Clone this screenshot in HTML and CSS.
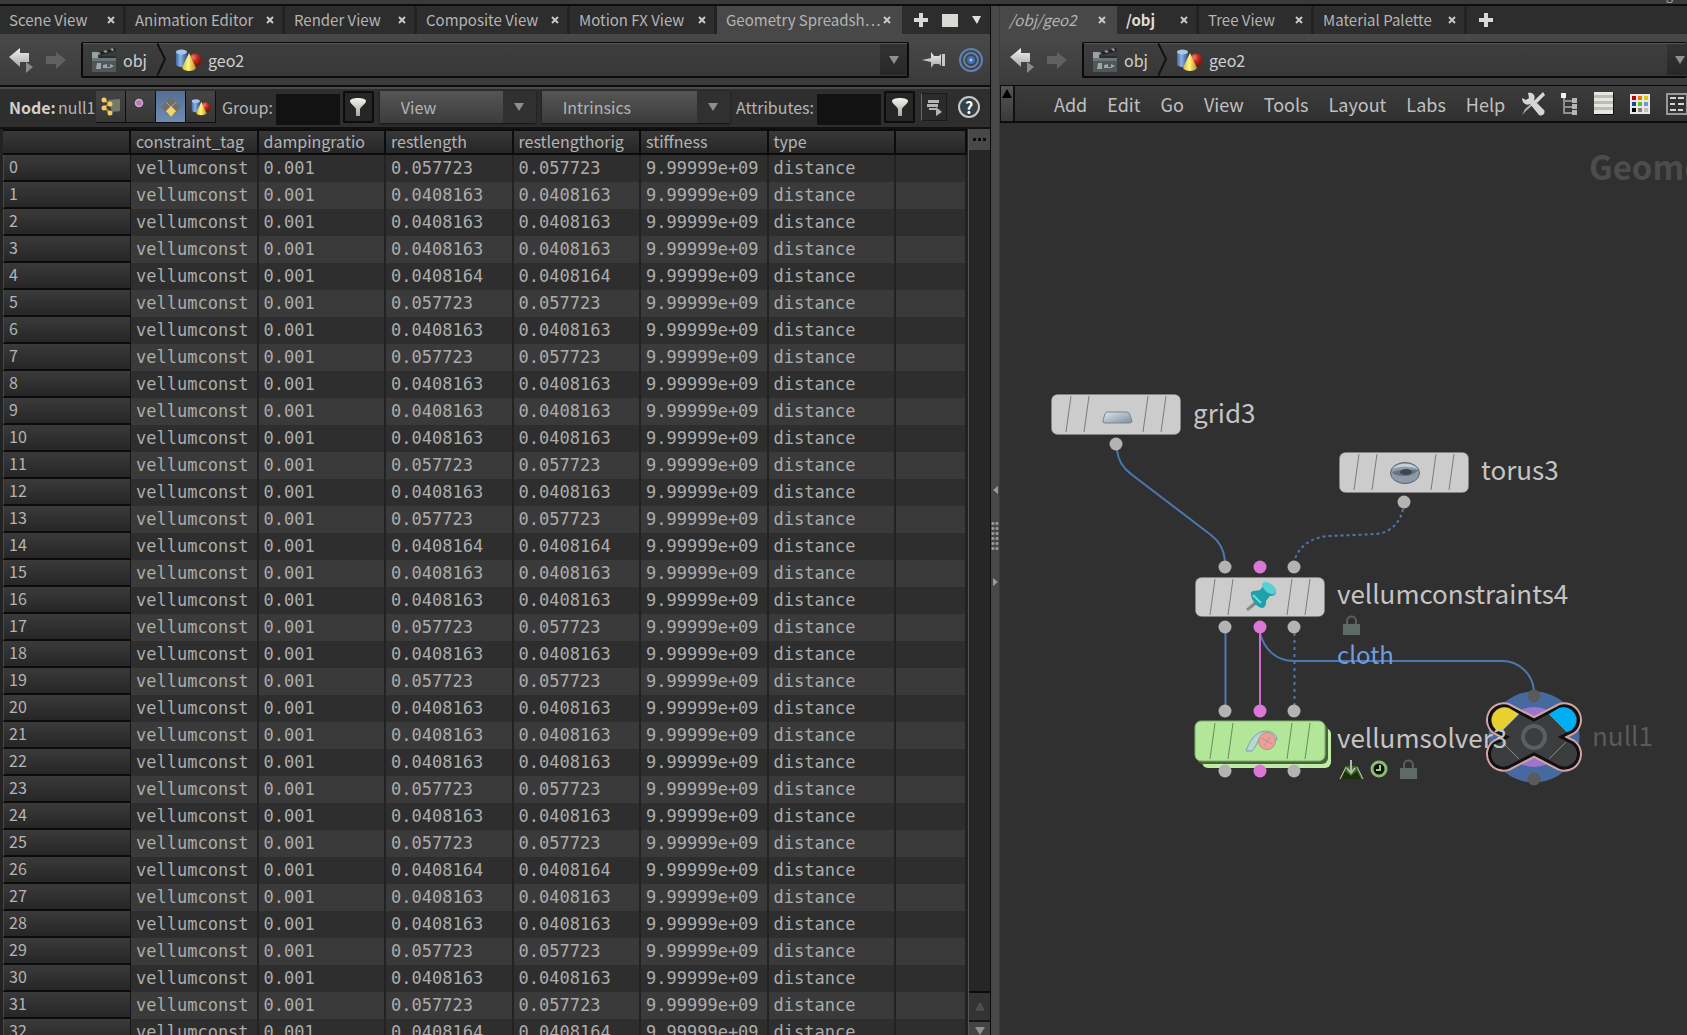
FILE: index.html
```html
<!DOCTYPE html>
<html lang="en">
<head>
<meta charset="utf-8">
<title>Geometry Spreadsheet</title>
<link rel="stylesheet" href="styles.css">
</head>
<body>
<svg class="defs" width="0" height="0" aria-hidden="true">
  <defs>
    <linearGradient id="gBlue" x1="0" x2="1"><stop offset="0" stop-color="#3f6aa3"/><stop offset=".4" stop-color="#8db3e0"/><stop offset="1" stop-color="#2d5388"/></linearGradient>
    <radialGradient id="gRed" cx=".35" cy=".3" r=".7"><stop offset="0" stop-color="#f08070"/><stop offset=".5" stop-color="#c0281c"/><stop offset="1" stop-color="#7d120c"/></radialGradient>
    <linearGradient id="gYellow" x1="0" x2="1"><stop offset="0" stop-color="#d8b820"/><stop offset=".45" stop-color="#fff48a"/><stop offset="1" stop-color="#b8900c"/></linearGradient>
    <linearGradient id="gSilver" x1="0" y1="0" x2="0" y2="1"><stop offset="0" stop-color="#f4f4f0"/><stop offset="1" stop-color="#a4a8a4"/></linearGradient>
    <linearGradient id="gSteel" x1="0" y1="0" x2="1" y2="1"><stop offset="0" stop-color="#dfe6ec"/><stop offset="1" stop-color="#7d8d9c"/></linearGradient>
    <symbol id="geo" viewBox="0 0 27 24">
      <path d="M1 4v12c0 4 11 4 11 0V4z" fill="url(#gBlue)"/><ellipse cx="6.500" cy="4" rx="5.500" ry="2.500" fill="#a9c6e8"/>
      <circle cx="20" cy="12" r="6.500" fill="url(#gRed)"/>
      <path d="M14 5l7 15c-2 4-12 4-14 0z" fill="url(#gYellow)"/>
    </symbol>
    <symbol id="clapper" viewBox="0 0 26 26">
      <rect x="1" y="11" width="24" height="14" fill="#4f5759"/><rect x="1" y="11" width="24" height="3" fill="#6b7476"/>
      <path d="M1 7l23-6 1 3L2 10z" fill="#1d1f20"/><path d="M5 6l3-1 2 2-3 1zM12 4l3-1 2 2-3 1zM19 2l3-1 1 3-2 0z" fill="#8b9496"/>
      <rect x="1" y="5" width="6" height="6" fill="#9aa3a4"/><path d="M8 9h17v2H8z" fill="#2a2d2e"/>
      <path d="M6 16h4v6H5zM12 18l4-1v3h3v-3l4 2-4 2h-7z" fill="#9fa8a9"/>
    </symbol>
    <symbol id="back" viewBox="0 0 25 26">
      <path d="M0 10L11 1v5h9v9h-9v5z" fill="url(#gSilver)"/><path d="M17 15l7 5-7 6z" fill="#8a8a8a"/>
    </symbol>
    <symbol id="fwd" viewBox="0 0 20 20"><path d="M20 10L10 2v4H0v8h10v5z" fill="#606060"/></symbol>
    <symbol id="down" viewBox="0 0 10 8"><path d="M0 0h10L5 8z" fill="#8f8f8f"/></symbol>
    <symbol id="plus" viewBox="0 0 14 14"><path d="M5 0h4v5h5v4H9v5H5V9H0V5h5z" fill="#d8d8d4"/></symbol>
    <symbol id="close" viewBox="0 0 8 8"><path d="M1 1l6 6M7 1L1 7" stroke="#c8c8c8" stroke-width="2"/></symbol>
    <symbol id="funnel" viewBox="0 0 18 20"><path d="M1 4c0-4 16-4 16 0 0 3-5 5-6 8v7H7v-7C6 9 1 7 1 4z" fill="url(#gSilver)"/></symbol>
  </defs>
</svg>

<div class="shelf"><span class="shelf-text shelf-solids">Solids</span><span class="shelf-text shelf-light">Light</span></div>

<main class="panes">
  <section class="pane">
    <nav class="tabs">
      <a class="tab t1" href="#">Scene View<svg class="x"><use href="#close"/></svg></a>
      <a class="tab t2" href="#">Animation Editor<svg class="x"><use href="#close"/></svg></a>
      <a class="tab t3" href="#">Render View<svg class="x"><use href="#close"/></svg></a>
      <a class="tab t4" href="#">Composite View<svg class="x"><use href="#close"/></svg></a>
      <a class="tab t5" href="#">Motion FX View<svg class="x"><use href="#close"/></svg></a>
      <a class="tab t6 active" href="#">Geometry Spreadsh…<svg class="x"><use href="#close"/></svg></a>
      <div class="tab-tools">
        <svg width="14" height="14"><use href="#plus"/></svg>
        <svg width="16" height="13"><rect width="16" height="13" fill="#d8d8d4"/></svg>
        <svg width="9" height="8"><path d="M0 0h9L5 8z" fill="#e0e0e0"/></svg>
      </div>
    </nav>
    <div class="path">
      <button class="ico back" aria-label="Back"><svg width="25" height="26"><use href="#back"/></svg></button>
      <button class="ico fwd" aria-label="Forward"><svg width="20" height="20"><use href="#fwd"/></svg></button>
      <div class="crumbs">
        <a class="crumb first" href="#"><svg width="26" height="26"><use href="#clapper"/></svg>obj</a>
        <svg class="chev" width="9" height="33"><path d="M0 0l8 16-8 17" fill="none" stroke="#111" stroke-width="2"/></svg>
        <a class="crumb" href="#"><svg width="27" height="24"><use href="#geo"/></svg>geo2</a>
        <button class="drop" aria-label="History"><svg width="10" height="8"><use href="#down"/></svg></button>
      </div>
      <button class="ico pin" aria-label="Pin"><svg width="25" height="20" viewBox="0 0 25 20"><path d="M0 10l9-2v4z" fill="#c8c8c8"/><path d="M9 2l3 4h5l2-2v12l-2-2h-5l-3 4z" fill="url(#gSilver)"/><path d="M20 4h3v12h-3z" fill="#c8c8c4"/></svg></button>
      <button class="ico" aria-label="Link"><svg width="24" height="24" viewBox="0 0 24 24"><g fill="none" stroke="#5f82b4" stroke-width="2"><circle cx="12" cy="12" r="11"/><circle cx="12" cy="12" r="7"/></g><circle cx="12" cy="12" r="4" fill="#3f70b8"/><circle cx="12" cy="12" r="1.500" fill="#a8c8f0"/></svg></button>
    </div>
    <form class="toolbar">
      <b class="node">Node:</b><span class="nodename">null1</span>
      <div class="modes">
        <button type="button" aria-label="Points"><svg width="20" height="20" viewBox="0 0 20 20"><path d="M7 3l12-1v12l-8 1z" fill="#77776a"/><path d="M3 3l6 4-6 3 6 6" fill="none" stroke="#a88a3c" stroke-width="2"/><g fill="#f0cc6c"><circle cx="3" cy="3" r="2.500"/><circle cx="9" cy="7" r="2.500"/><circle cx="3" cy="11" r="2.500"/><circle cx="9" cy="16" r="2.500"/></g></svg></button>
        <button type="button" aria-label="Vertices"><svg width="20" height="20" viewBox="0 0 20 20"><circle cx="8" cy="6" r="3.500" fill="#b07cb4" stroke="#d8a8dc" stroke-width="1.500"/></svg></button>
        <button type="button" class="on" aria-label="Primitives"><svg width="20" height="20" viewBox="0 0 20 20"><path d="M10 0l10 10-10 10L0 10z" fill="#716f68"/><path d="M5 5l10 10M15 5L5 15" stroke="#a8a698"/><path d="M10 9l5 5-5 6-5-6z" fill="#f4d468"/></svg></button>
        <button type="button" aria-label="Detail"><svg width="20" height="18"><use href="#geo"/></svg></button>
      </div>
      <label class="lbl" for="group">Group:</label><input id="group" type="text">
      <button type="button" class="filter" aria-label="Filter group"><svg width="18" height="20"><use href="#funnel"/></svg></button>
      <div class="sel view"><select aria-label="View"><option>View</option></select><svg width="10" height="8"><use href="#down"/></svg></div>
      <div class="sel intr"><select aria-label="Intrinsics"><option>Intrinsics</option></select><svg width="10" height="8"><use href="#down"/></svg></div>
      <label class="lbl" for="attrs">Attributes:</label><input id="attrs" type="text">
      <button type="button" class="filter" aria-label="Filter attributes"><svg width="18" height="20"><use href="#funnel"/></svg></button>
      <button type="button" class="opts" aria-label="Options"><svg width="16" height="18" viewBox="0 0 16 18"><path d="M2 2h11v3H2zM1 6h11v3H1zM3 10h8v2H3zM10 9l6 5-6 4z" fill="#b4b4b4"/></svg></button>
      <button type="button" class="help" aria-label="Help">?</button>
    </form>
    <div class="sheet">
      <table class="grid">
        <colgroup><col class="c-num"><col><col><col><col><col><col><col class="c-end"></colgroup>
        <thead><tr><th></th><th>constraint_tag</th><th>dampingratio</th><th>restlength</th><th>restlengthorig</th><th>stiffness</th><th>type</th><th></th></tr></thead>
        <tbody id="rows"></tbody>
      </table>
      <div class="scroll">
        <button class="dots" aria-label="Columns"><i></i><i></i><i></i></button>
        <div class="track"></div>
        <button class="up" aria-label="Scroll up"><svg width="9" height="9"><path d="M1 8l4-7 4 7z" fill="#4a4a4a" stroke="#585858"/></svg></button>
        <button class="dn" aria-label="Scroll down"><svg width="10" height="8"><use href="#down"/></svg></button>
      </div>
    </div>
  </section>

  <div class="splitter">
    <svg width="5" height="8"><path d="M5 0v8L0 4z" fill="#999"/></svg>
    <div class="grip"></div>
    <svg width="5" height="8"><path d="M0 0v8l5-4z" fill="#999"/></svg>
  </div>

  <section class="pane net">
    <nav class="tabs">
      <a class="tab r1 active" href="#"><em>/obj/geo2</em><svg class="x"><use href="#close"/></svg></a>
      <a class="tab r2" href="#"><b>/obj</b><svg class="x"><use href="#close"/></svg></a>
      <a class="tab r3" href="#">Tree View<svg class="x"><use href="#close"/></svg></a>
      <a class="tab r4" href="#">Material Palette<svg class="x"><use href="#close"/></svg></a>
      <div class="tab-tools"><svg width="14" height="14"><use href="#plus"/></svg></div>
    </nav>
    <div class="path">
      <button class="ico back" aria-label="Back"><svg width="25" height="26"><use href="#back"/></svg></button>
      <button class="ico fwd" aria-label="Forward"><svg width="20" height="20"><use href="#fwd"/></svg></button>
      <div class="crumbs">
        <a class="crumb first" href="#"><svg width="26" height="26"><use href="#clapper"/></svg>obj</a>
        <svg class="chev" width="9" height="33"><path d="M0 0l8 16-8 17" fill="none" stroke="#111" stroke-width="2"/></svg>
        <a class="crumb" href="#"><svg width="27" height="24"><use href="#geo"/></svg>geo2</a>
        <button class="drop" aria-label="History"><svg width="10" height="8"><use href="#down"/></svg></button>
      </div>
    </div>
    <div class="menubar">
      <button class="collapse" aria-label="Collapse"><svg width="10" height="9"><path d="M0 9l5-9 5 9z" fill="#000"/></svg></button>
      <nav class="menus">
        <a href="#">Add</a><a href="#">Edit</a><a href="#">Go</a><a href="#">View</a><a href="#">Tools</a><a href="#">Layout</a><a href="#">Labs</a><a href="#">Help</a>
      </nav>
      <div class="menu-icons">
        <svg width="24" height="24" viewBox="0 0 24 24"><path d="M22 1l1 2L5 19l-4 4 3-6z" fill="#a8acac"/><path d="M22 0l2 3-8 8-3-2z" fill="#d8dad8"/><path d="M1 6l4 2 3-2-1-5c5-1 8 3 6 7l10 10c2 3-2 7-5 5L9 12c-4 2-8-1-8-6z" fill="#d4d6d2"/></svg>
        <svg width="17" height="24" viewBox="0 0 17 24"><path d="M3 3v18h9M3 9h9M3 15h9" fill="none" stroke="#8c908c" stroke-width="2"/><path d="M0 1h5v5H0z" fill="#eee"/><path d="M11 6h5v5h-5zM11 12h5v5h-5zM11 18h5v5h-5z" fill="#b4b8b4"/></svg>
        <svg width="20" height="23" viewBox="0 0 20 23"><path d="M1 1h19v22H1z" fill="#111"/><path d="M0 0h19v22H0z" fill="#e6e6e0"/><path d="M0 3h19v3H0zM0 9h19v3H0zM0 15h19v3H0z" fill="#bcbcb2"/></svg>
        <svg width="20" height="20" viewBox="0 0 20 20"><path d="M0 0h20v20H0z" fill="#e8e8e8"/><path d="M2 2h4v4H2z" fill="#c00000"/><path d="M8 2h4v4H8z" fill="#e87800"/><path d="M14 2h4v4h-4z" fill="#dcc800"/><path d="M2 8h4v4H2z" fill="#1c4890"/><path d="M8 8h4v4H8z" fill="#64c010"/><path d="M14 8h4v4h-4z" fill="#6c98d0"/><path d="M2 14h4v4H2z" fill="#000"/><path d="M8 14h4v4H8z" fill="#808080"/><path d="M14 14h4v4h-4z" fill="#c0c0bc"/></svg>
        <svg width="22" height="22" viewBox="0 0 22 22"><path d="M1 1h20v20H1z" fill="#333" stroke="#999" stroke-width="2"/><path d="M4 4h6v2H4zM12 4h6v2h-6zM4 10h5v2H4zM12 10h6v2h-6zM4 16h6v2H4zM12 16h5v2h-5z" fill="#d4d4d0"/></svg>
      </div>
    </div>
    <div class="canvas">
      <div class="context">Geometry</div>
      <svg class="graph" viewBox="1000 123 687 912" width="687" height="912">
        <defs>
          <g id="slashes"><path d="M20 2l-5 36M38 2l-5 36M97 2l-5 36M115 2l-5 36" stroke="#000" stroke-opacity=".4" fill="none"/></g>
          <g id="lock"><path d="M4 9V6c0-6 9-6 9 0v3" fill="none" stroke="#566060" stroke-width="2"/><rect y="9" width="17" height="11" fill="#5f6b69"/></g>
        </defs>
        <g fill="none" stroke="#4c78b0" stroke-width="2">
          <path d="M1117 450c1 10 6 18 14 24l80 61c8 6 13 14 14 26"/>
          <path d="M1403 509c-3 14-13 24-27 25l-45 2c-18 0-33 10-37 26" stroke-dasharray="3 3"/>
          <path d="M1225.500 633v72"/>
          <path d="M1294.500 633v72" stroke-dasharray="3 4"/>
          <path d="M1260 633c4 16 16 28 34 28h208c18 0 31 14 32 30"/>
          <path d="M1260 633v72" stroke="#cc6ccc"/>
        </g>
        <g stroke="#888" stroke-opacity=".5">
          <rect x="1051.500" y="394.500" width="129" height="40" rx="6" fill="#cccccc"/>
          <rect x="1339.500" y="452.500" width="129" height="40" rx="6" fill="#cccccc"/>
          <rect x="1195.500" y="577.500" width="129" height="39" rx="6" fill="#cccccc"/>
        </g>
        <rect x="1202" y="728" width="129" height="40" rx="6" fill="#c0eca8"/>
        <rect x="1197" y="724" width="131" height="40" rx="6" fill="#48633a"/>
        <rect x="1195" y="721" width="130" height="40" rx="6" fill="#b2e698" stroke="#7fb068"/>
        <use href="#slashes" x="1051" y="394"/><use href="#slashes" x="1339" y="452"/><use href="#slashes" x="1195" y="577"/><use href="#slashes" x="1195" y="721"/>
        <path d="M1107 412h20q2 0 3 3l2 6q0 2-3 2h-24q-3 0-2-3l2-6q1-2 2-2z" fill="url(#gSteel)" stroke="#7b868e" stroke-width="1"/>
        <ellipse cx="1405" cy="473" rx="14.500" ry="10.500" fill="#8d9ba8" stroke="#56646e"/><path d="M1392 469c6-7 20-7 26 0-8-3-18-3-26 0z" fill="#c4d0da"/><path d="M1392 472c8-3 18-3 26-2-3 4-8 6-14 6s-10-1-12-4z" fill="#657480"/><ellipse cx="1406" cy="472" rx="6" ry="3" fill="#3c4850"/>
        <path d="M1246 609l9-8 2 3-9 7z" fill="#888"/><path d="M1251 592c3-2 7-1 9-2l4-5c3-4 12 1 12 7 0 3-3 4-6 4l-4 5c0 3 0 5-3 7-6 0-13-9-12-16z" fill="#1fa0aa"/><ellipse cx="1269" cy="588" rx="8" ry="4.500" transform="rotate(40 1269 588)" fill="#58d0d4"/><path d="M1253 595l8 8" stroke="#6fdce0" stroke-width="2"/>
        <path d="M1246 751c3-9 9-19 19-20 7 0 12 4 12 9l-8-3c-5-1-9 0-11 4s-3 7-6 10z" fill="#b4d8d4" stroke="#7ca09c"/><circle cx="1267" cy="741" r="8.500" fill="#e8a09c" stroke="#c88884"/><path d="M1262 738l10 6M1264 746l6-9" stroke="#d08884"/>
        <g fill="#b3b3b3">
          <circle cx="1116" cy="444" r="6.500"/><circle cx="1404" cy="502" r="6.500"/>
          <circle cx="1225" cy="567" r="6.500"/><circle cx="1294" cy="567" r="6.500"/>
          <circle cx="1225" cy="627" r="6.500"/><circle cx="1294" cy="627" r="6.500"/>
          <circle cx="1225" cy="711" r="6.500"/><circle cx="1294" cy="711" r="6.500"/>
          <circle cx="1225" cy="771" r="6.500"/><circle cx="1294" cy="771" r="6.500"/>
        </g>
        <g fill="#da78d8">
          <circle cx="1260" cy="567" r="6.500"/><circle cx="1260" cy="627" r="6.500"/><circle cx="1260" cy="711" r="6.500"/><circle cx="1260" cy="771" r="6.500"/>
        </g>
        <use href="#lock" x="1343" y="615"/><use href="#lock" x="1400" y="759"/>
        <path d="M1346 766h11l6 13h-23z" fill="#3c6a24"/><path d="M1345 771l6 5 6-5 4 8h-20z" fill="#1c3010"/><path d="M1340 779l6-12M1363 779l-6-12" stroke="#c4d4b4"/><path d="M1351 760v12M1347 768l4 5 4-5" stroke="#b4b8ac" stroke-width="2" fill="none"/>
        <circle cx="1379" cy="769" r="7" fill="#0c0f0a" stroke="#8fb870" stroke-width="3"/><path d="M1380 765v5h-4" fill="none" stroke="#a0cc80" stroke-width="2"/>
        <g transform="translate(1534 737)">
          <circle r="45.500" fill="#46699f"/><circle r="30" fill="#9a76cc"/>
          <path d="M0-17L25-30A14 14 0 0 1 39-6L27 0 39 6A14 14 0 0 1 25 30L0 17-25 30A14 14 0 0 1-39 6L-27 0-39-6A14 14 0 0 1-25-30z" fill="#d4a4a4" stroke="#d4a4a4" stroke-width="7"/>
          <path d="M0-17L25-30A14 14 0 0 1 39-6L27 0 39 6A14 14 0 0 1 25 30L0 17-25 30A14 14 0 0 1-39 6L-27 0-39-6A14 14 0 0 1-25-30z" fill="#3b3d3f" stroke="#101010" stroke-width="3"/>
          <path d="M-15-23L-25-29A13 13 0 0 0-38-7L-33-5z" fill="#e8d030"/>
          <path d="M15-23L25-29A13 13 0 0 1 38-7L33-5z" fill="#00aef4"/>
          <path d="M-15-23L-33-5M15-23L33-5M-32 5l17 17M32 5L15 22" stroke="#85888a" fill="none"/>
          <circle r="11" fill="none" stroke="#5c5e60" stroke-width="4"/>
          <circle cy="-41" r="6.500" fill="#5a5a5a"/><circle cy="42" r="6.500" fill="#5a5a5a"/>
        </g>
        <g class="names">
          <text x="1193" y="423">grid3</text>
          <text x="1481" y="480">torus3</text>
          <text x="1337" y="604">vellumconstraints4</text>
          <text x="1337" y="748">vellumsolver3</text>
          <text class="dim" x="1592" y="746">null1</text>
          <text class="cloth" x="1337" y="664">cloth</text>
        </g>
      </svg>
    </div>
  </section>
</main>
<script src="rows.js"></script>
</body>
</html>
```
FILE: styles.css
```css
* { box-sizing: border-box; }
body {
  margin: 0; height: 100vh; overflow: hidden;
  display: flex; flex-direction: column;
  background: #2f2f2f; color: #b4b4b4;
  font: 16px/24px "Noto Sans CJK SC", "Open Sans", sans-serif;
}
a { color: inherit; text-decoration: none; }
button, input, select { font: inherit; color: inherit; border: 0; padding: 0; margin: 0; background: none; border-radius: 0; }
svg { display: block; flex: none; }
.defs { position: absolute; }

.shelf { height: 6px; flex: none; background: #3a3a3a; border-bottom: 2px solid #0c0c0c; overflow: hidden; display: flex; align-items: flex-end; font-size: 13px; line-height: 14px; color: #999; }
.shelf-text { flex: none; height: 16px; }
.shelf-solids { margin-left: 56%; }
.shelf-light { margin-left: auto; padding-right: 1px; }

.panes { flex: 1; min-height: 0; display: grid; grid-template-columns: minmax(0, 991fr) 9px minmax(0, 687fr); }
.pane { min-width: 0; min-height: 0; display: flex; flex-direction: column; overflow: hidden; border-right: 1px solid #0c0c0c; }
.net { border-right: 0; }

.tabs { display: flex; height: 28px; flex: none; background: #2d2d2d; font-size: 15px; line-height: 28px; }
.tab { display: flex; align-items: center; justify-content: space-between; padding: 0 8px 0 9px; border-right: 3px solid #232323; white-space: nowrap; flex: none; }
.tab.active { background: #484848; border-color: #484848; }
.tab b { color: #ddd; }
.x { width: 8px; height: 8px; }
.t1 { width: 126px; } .t2 { width: 159px; } .t3 { width: 132px; } .t4 { width: 153px; } .t5 { width: 147px; } .t6 { width: 185px; }
.r1 { width: 117px; } .r2 { width: 82px; } .r3 { width: 115px; } .r4 { width: 153px; }
.tab-tools { display: flex; align-items: center; gap: 14px; padding-left: 12px; }

.path { display: flex; align-items: center; height: 51px; flex: none; padding: 1px 7px 0 9px; background: linear-gradient(#494949, #3b3b3b); }
.ico { display: flex; }
.back { margin-right: 12px; }
.fwd { margin-right: 15px; }
.crumbs { flex: 1; min-width: 0; display: flex; align-items: center; height: 36px; border: 1px solid #0a0a0a; border-width: 1px 2px 2px; border-radius: 2px; background: linear-gradient(#3e3e3e, #373737); box-shadow: inset 0 1px #555; color: #d0d0d0; }
.crumb { display: flex; align-items: center; gap: 6px; }
.crumb.first { padding: 0 10px 0 8px; }
.chev { margin-right: 9px; }
.drop { margin-left: auto; width: 27px; height: 31px; background: linear-gradient(#333, #282828); display: grid; place-items: center; }
.pin { margin: 0 12px 0 13px; }
.net .path { padding: 1px 0 0 10px; }
.net .crumbs { border-right: 0; }
.net .drop { width: 20px; justify-content: end; padding-right: 2px; }

.toolbar { display: flex; align-items: center; height: 44px; flex: none; padding: 2px 10px 2px 8px; background: #2e2e2e; border-top: 2px solid #0c0c0c; border-bottom: 2px solid #111; box-shadow: inset 0 2px #4a4a4a; }
.node { width: 50px; padding-left: 1px; color: #d0d0d0; }
.nodename { width: 38px; }
.modes { display: flex; gap: 1px; margin-right: 6px; background: #0c0c0c; padding: 0 1px 1px 0; }
.modes button { width: 29px; height: 31px; display: grid; place-items: center; background: linear-gradient(#444, #363636); }
.modes .on { background: linear-gradient(#556f94, #6f8cb0); }
.lbl { flex: none; margin-right: 3px; white-space: nowrap; }
.toolbar input { width: 64px; height: 31px; background: #121212; margin-top: 4px; margin-right: 3px; }
.filter { width: 31px; height: 32px; flex: none; background: #262626; border: 2px solid #0c0c0c; border-radius: 2px; display: grid; place-items: center; margin-right: 6px; }
.sel { display: grid; grid-template-columns: 1fr 33px; align-items: center; height: 32px; background: linear-gradient(90deg, transparent calc(100% - 33px), #303030 0), linear-gradient(#555, #3c3c3c); box-shadow: 0 1px 2px #111; margin-right: 6px; }
.sel select { appearance: none; grid-area: 1 / 1 / 2 / 3; padding-left: 21px; height: 32px; width: 100%; outline: 0; }
.sel svg { grid-area: 1 / 2; justify-self: center; pointer-events: none; }
.view { flex: 158; } .intr { flex: 191; }
.opts { width: 26px; height: 28px; background: #2b2b2b; border: 1px solid #1a1a1a; border-left-color: #666; display: grid; place-items: center; margin-right: 11px; }
.help { width: 22px; height: 22px; flex: none; border: 2px solid #c8c8c8; border-radius: 50%; background: #32404a; color: #fff; font-weight: bold; line-height: 18px; }

.sheet { flex: 1; min-height: 0; display: flex; padding-left: 3px; overflow: hidden; align-items: stretch; background: #222; }
.grid { flex: 1; align-self: flex-start; table-layout: fixed; border-collapse: separate; border-spacing: 0; width: 0; }
.c-num { width: 128px; } .c-end { width: 71px; }
.grid th { font-weight: normal; text-align: left; white-space: nowrap; }
thead th { height: 26px; padding: 0 0 2px 5px; line-height: 18px; background: linear-gradient(#383838, #262626); border: solid #0c0c0c; border-width: 2px 2px 2px 0; }
tbody th { height: 27px; padding: 0 0 2px 5px; line-height: 23px; background: linear-gradient(#3a3a3a, #262626); border-left: 1px solid #4a4a4a; border-bottom: 2px solid #0c0c0c; border-right: 1px solid #161616; }
tbody td { height: 27px; padding: 0 0 0 5px; line-height: 27px; white-space: nowrap; border-right: 2px solid #222; background: #2e2e2e; font-family: "DejaVu Sans Mono", monospace; font-size: 17px; color: #acacac; }
tbody tr:nth-child(even) td { background: #3a3a3a; }
.scroll { width: 22px; margin-left: 1px; flex: none; display: flex; flex-direction: column; border-left: 1px solid #555; background: #262626; }
.dots { height: 21px; background: #484848; display: flex; align-items: center; justify-content: center; gap: 2px; }
.dots i { width: 3px; height: 3px; background: #0c0c0c; }
.track { flex: 1; border-bottom: 2px solid #0c0c0c; }
.up, .dn { height: 27px; background: #333; display: grid; place-items: center; }
.dn { height: 15px; background: #444; border-top: 2px solid #161616; align-items: end; }

.splitter { background: #484848; display: flex; flex-direction: column; align-items: center; justify-content: center; gap: 27px; padding-top: 30px; border-right: 1px solid #3a3a3a; }
.grip { width: 8px; height: 30px; background: radial-gradient(circle, #999 1px, transparent 2px) 0 0 / 4px 5px; }

.menubar { display: flex; height: 38px; flex: none; border-top: 1px solid #0c0c0c; border-bottom: 2px solid #0c0c0c; background: linear-gradient(#3c3c3c, #303030); font-size: 18px; line-height: 36px; }
.collapse { width: 15px; flex: none; display: flex; justify-content: center; padding-top: 3px; background: linear-gradient(#555, #3a3a3a); border: solid #111; border-width: 0 2px 0 1px; }
.menus { display: flex; gap: 20px; padding-left: 39px; color: #c0c0c0; }
.menu-icons { display: flex; align-items: center; gap: 16px; padding-left: 16px; }
.canvas { flex: 1; min-height: 0; position: relative; overflow: hidden; background: #303030; }
.context { position: absolute; left: 589px; top: 19px; font-size: 33px; line-height: 48px; font-weight: bold; color: #4c4c4c; }
.graph { position: absolute; left: 0; top: 0; }
.names { font-size: 26px; fill: #c4c4c4; }
.names .dim { fill: #5a5a5a; }
.names .cloth { fill: #6c9ee0; font-size: 24px; }
```
FILE: rows.js
```js
// Rest length of each primitive, one letter per row.
const lengths = { A: "0.057723", B: "0.0408163", C: "0.0408164" };
const order = "ABBBCABABBBABACBBABABBBABACBBABAC";
const body = document.getElementById("rows");

[...order].forEach((key, index) => {
  const row = body.insertRow();
  const head = document.createElement("th");
  head.scope = "row";
  head.textContent = index;
  row.append(head);
  ["vellumconst", "0.001", lengths[key], lengths[key], "9.99999e+09", "distance", ""].forEach((value) => {
    row.insertCell().textContent = value;
  });
});
```
